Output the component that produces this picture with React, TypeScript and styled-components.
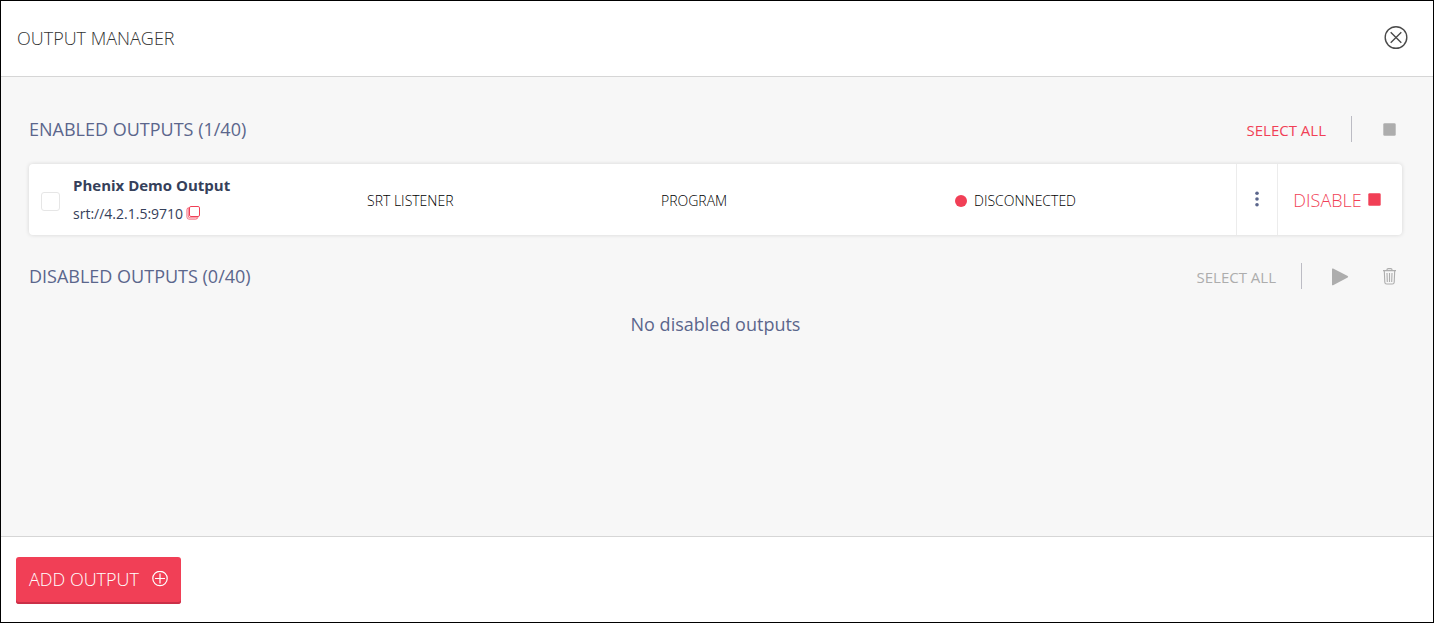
import React from "react";
import styled, { createGlobalStyle } from "styled-components";

const GlobalStyle = createGlobalStyle`
  *, *::before, *::after { box-sizing: border-box; }
  body { margin: 0; background: #000; font-family: "Open Sans", "Noto Sans", sans-serif; }
  h1, h2, p { margin: 0; font-weight: 400; }
  button { font-family: inherit; margin: 0; padding: 0; border: 0; background: none; cursor: pointer; }
  svg { display: block; flex: none; }
`;

const red = "#f13f56";
const grey = "#adadad";
const slate = "#5b668c";

const Dialog = styled.main`
  display: flex;
  flex-direction: column;
  min-height: 100vh;
  border: 1px solid #000;
  background: #fff;
`;

const Header = styled.header`
  display: flex;
  align-items: center;
  justify-content: space-between;
  padding: 23px 25px 24px 16px;
  border-bottom: 1px solid #d6d6d6;
`;

const Title = styled.h1`
  font-size: 18px;
  font-weight: 350;
  line-height: 28px;
  color: #333;
`;

const Content = styled.div`
  flex: 1;
  padding: 36px 31px 36px 28px;
  background: #f7f7f7;
`;

const SectionHeader = styled.div`
  display: flex;
  align-items: center;
  justify-content: space-between;
  height: 32px;
`;

const SectionTitle = styled.h2`
  font-size: 18px;
  line-height: 32px;
  color: ${slate};
`;

const Actions = styled.div`
  display: flex;
  align-items: center;
  gap: 25px;
`;

const SelectAll = styled.button`
  font-size: 15px;
  line-height: 24px;
  padding-top: 2px;
  color: ${red};
  &:disabled { color: ${grey}; cursor: default; }
`;

const Divider = styled.span`
  width: 1px;
  height: 26px;
  background: #bcbcc4;
`;

const IconButton = styled.button`
  display: flex;
  align-items: center;
  justify-content: center;
  width: 25px;
  height: 25px;
  color: ${grey};
`;

const Card = styled.article`
  display: flex;
  height: 71px;
  margin: 19px 0 25px;
  border-radius: 4px;
  background: #fff;
  box-shadow: 0 0 4px rgba(0, 0, 0, 0.14);
`;

const CheckCell = styled.div`
  display: flex;
  align-items: center;
  width: 44px;
  padding: 4px 0 0 12px;
`;

const Checkbox = styled.input`
  appearance: none;
  width: 19px;
  height: 19px;
  margin: 0;
  border: 1px solid #e6e6e6;
  border-radius: 3px;
  background: #fff;
  &:checked { background: ${red}; }
`;

const Details = styled.div`
  flex: 1;
  display: grid;
  grid-template-columns: repeat(4, minmax(0, 1fr));
  column-gap: 13px;
  align-items: center;
`;

const Identity = styled.div`
  display: grid;
  row-gap: 1px;
`;

const Name = styled.p`
  font-size: 15px;
  line-height: 28px;
  font-weight: 700;
  color: #35405a;
`;

const Address = styled.div`
  display: flex;
  align-items: center;
  gap: 3px;
  font-size: 14px;
  line-height: 28px;
  color: #35405a;
`;

const CopyButton = styled.button`
  padding-bottom: 2px;
  color: ${red};
`;

const Value = styled.div`
  display: flex;
  align-items: center;
  gap: 7px;
  padding-top: 2px;
  font-size: 14px;
  font-weight: 350;
  line-height: 20px;
  color: #000;
`;

const StatusDot = styled.span`
  width: 12px;
  height: 12px;
  border-radius: 50%;
  background: ${red};
`;

const MenuButton = styled.button`
  display: flex;
  align-items: center;
  justify-content: center;
  width: 41px;
  padding-bottom: 2px;
  border-left: 1px solid #ececec;
  color: ${slate};
`;

const DisableButton = styled.button`
  display: flex;
  align-items: center;
  justify-content: center;
  gap: 6px;
  width: 125px;
  padding-right: 6px;
  border-left: 1px solid #ececec;
  font-size: 18px;
  font-weight: 350;
  line-height: 24px;
  color: ${red};
`;

const Empty = styled.p`
  margin-top: 16px;
  font-size: 18px;
  line-height: 32px;
  text-align: center;
  color: ${slate};
`;

const Footer = styled.footer`
  padding: 20px 15px 18px;
  border-top: 1px solid #d6d6d6;
`;

const AddButton = styled.button`
  display: flex;
  align-items: center;
  gap: 13px;
  height: 47px;
  padding: 0 13px 3px;
  border-radius: 3px;
  background: ${red};
  box-shadow: inset 0 -2px 0 #ca3048;
  color: #fff;
  font-size: 18px;
  font-weight: 350;
  line-height: 24px;
`;

const StopIcon = () => (
  <svg width="13" height="13" viewBox="0 0 13 13" fill="currentColor" aria-hidden="true">
    <rect x="0.3" y="0.3" width="12.4" height="12.4" rx="1.3" />
  </svg>
);

const PlayIcon = () => (
  <svg width="19" height="19" viewBox="0 0 19 19" fill="currentColor" aria-hidden="true">
    <path d="M2 2.2Q2 1.1 3.1 1.6L17.7 9.1Q18.7 9.8 17.7 10.5L3.1 18.2Q2 18.7 2 17.5Z" />
  </svg>
);

const TrashIcon = () => (
  <svg width="13" height="17" viewBox="0 0 13 17" fill="none" stroke="currentColor" strokeWidth="1.1" aria-hidden="true">
    <path d="M0 2.6H13M4 2.6V1.8Q4 0.6 5.2 0.6H7.8Q9 0.6 9 1.8V2.6M1.3 2.8L1.8 14.2Q1.9 16 3.6 16H9.4Q11.1 16 11.2 14.2L11.7 2.8M4 5L4.3 14M6.5 5V14M9 5L8.7 14" />
  </svg>
);

const CloseIcon = () => (
  <svg width="24" height="24" viewBox="0 0 24 24" fill="none" stroke="#4a4a4a" strokeWidth="1.4" aria-hidden="true">
    <circle cx="12" cy="11.5" r="10.8" />
    <path d="M6.7 6.2L17.3 16.8M17.3 6.2L6.7 16.8" />
  </svg>
);

const CopyIcon = () => (
  <svg width="15" height="15" viewBox="0 0 15 15" fill="none" stroke="currentColor" strokeWidth="1" aria-hidden="true">
    <rect x="3.5" y="0.5" width="10" height="10" rx="1.4" />
    <path strokeOpacity="0.7" d="M3.3 1.6Q0.9 1.6 0.9 3.8V10.8Q0.9 13.2 3.1 13.2H9.6Q11.7 13.2 12 11M2.3 2.2V10Q2.3 11.8 3.9 11.8H11.2" />
  </svg>
);

const DotsIcon = () => (
  <svg width="4" height="16" viewBox="0 0 4 16" fill="currentColor" aria-hidden="true">
    <circle cx="2" cy="2.2" r="1.8" />
    <circle cx="2" cy="8" r="1.8" />
    <circle cx="2" cy="13.8" r="1.8" />
  </svg>
);

const PlusIcon = () => (
  <svg width="16" height="16" viewBox="0 0 16 16" fill="none" stroke="currentColor" strokeWidth="1.2" aria-hidden="true">
    <circle cx="8" cy="7.5" r="7.2" />
    <path d="M8 2.5V12.5M3 7.5H13" />
  </svg>
);

export default function App() {
  return (
    <>
      <GlobalStyle />
      <Dialog>
        <Header>
          <Title>OUTPUT MANAGER</Title>
          <button aria-label="Close"><CloseIcon /></button>
        </Header>
        <Content>
          <SectionHeader>
            <SectionTitle>ENABLED OUTPUTS (1/40)</SectionTitle>
            <Actions>
              <SelectAll>SELECT ALL</SelectAll>
              <Divider />
              <IconButton aria-label="Disable selected"><StopIcon /></IconButton>
            </Actions>
          </SectionHeader>
          <Card>
            <CheckCell>
              <Checkbox type="checkbox" aria-label="Select Phenix Demo Output" />
            </CheckCell>
            <Details>
              <Identity>
                <Name>Phenix Demo Output</Name>
                <Address>
                  srt://4.2.1.5:9710
                  <CopyButton aria-label="Copy address"><CopyIcon /></CopyButton>
                </Address>
              </Identity>
              <Value>SRT LISTENER</Value>
              <Value>PROGRAM</Value>
              <Value><StatusDot />DISCONNECTED</Value>
            </Details>
            <MenuButton aria-label="More options"><DotsIcon /></MenuButton>
            <DisableButton>DISABLE<StopIcon /></DisableButton>
          </Card>
          <SectionHeader>
            <SectionTitle>DISABLED OUTPUTS (0/40)</SectionTitle>
            <Actions>
              <SelectAll disabled>SELECT ALL</SelectAll>
              <Divider />
              <IconButton aria-label="Enable selected"><PlayIcon /></IconButton>
              <IconButton aria-label="Delete selected"><TrashIcon /></IconButton>
            </Actions>
          </SectionHeader>
          <Empty>No disabled outputs</Empty>
        </Content>
        <Footer>
          <AddButton>ADD OUTPUT<PlusIcon /></AddButton>
        </Footer>
      </Dialog>
    </>
  );
}
